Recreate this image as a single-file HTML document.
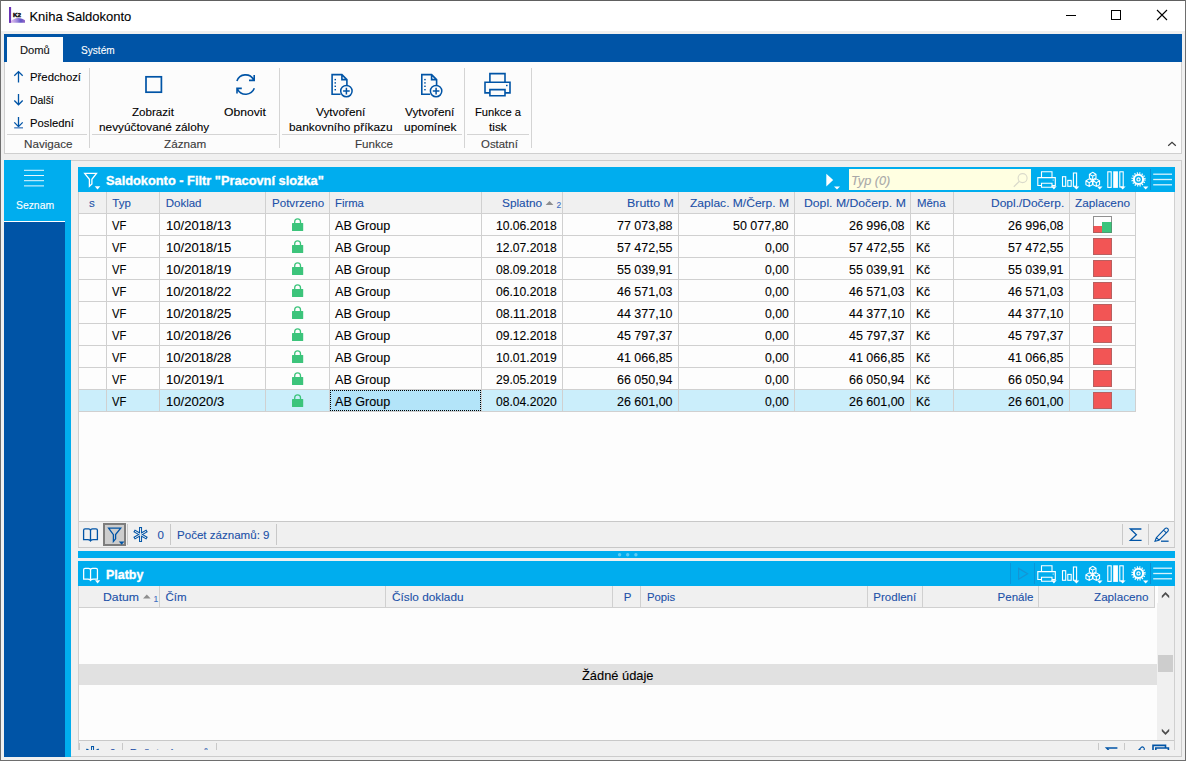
<!DOCTYPE html>
<html lang="cs"><head><meta charset="utf-8"><title>Kniha Saldokonto</title>
<style>
html,body{margin:0;padding:0}
body{width:1186px;height:761px;overflow:hidden;position:relative;background:#f0f0f0;font-family:"Liberation Sans",sans-serif;}
#win div,#win svg,#win span{position:absolute}
#win{position:absolute;left:0;top:0;width:1186px;height:761px;overflow:hidden}
.t{white-space:pre;line-height:normal;transform-origin:0 0;display:block;-webkit-text-stroke:0.1px currentColor}
svg{overflow:visible}
</style></head><body><div id="win">
<div style="left:0px;top:0px;width:1186px;height:761px;background:#f0f0f0;"></div><div style="left:1px;top:1px;width:1184px;height:30px;background:#ffffff;"></div><div style="left:4px;top:34px;width:1178px;height:28px;background:#0054a6;"></div><div style="left:7px;top:37px;width:56px;height:25px;background:#fcfcfc;"></div><div style="left:4px;top:62px;width:1178px;height:92px;background:#fcfcfc;box-sizing:border-box;border:1px solid #cfcfcf;border-top:none;"></div><span class="t" style="left:29.40px;top:8.5px;font-size:13px;color:#000;">Kniha Saldokonto</span><span class="t" style="left:19.60px;top:44px;font-size:10.5px;color:#111;transform:scaleX(1.0650);">Domů</span><span class="t" style="left:81.00px;top:44px;font-size:10.5px;color:#fff;transform:scaleX(0.9614);">Systém</span><span class="t" style="left:30.40px;top:71px;font-size:11.5px;color:#000;transform:scaleX(0.9851);">Předchozí</span><span class="t" style="left:30.40px;top:94px;font-size:11.5px;color:#000;transform:scaleX(0.9072);">Další</span><span class="t" style="left:30.40px;top:117px;font-size:11.5px;color:#000;transform:scaleX(0.9790);">Poslední</span><span class="t" style="left:23.80px;top:138px;font-size:11.5px;color:#3a3a3a;transform:scaleX(1.0137);">Navigace</span><span class="t" style="left:132.20px;top:106px;font-size:11.5px;color:#000;transform:scaleX(1.0083);">Zobrazit</span><span class="t" style="left:98.50px;top:121px;font-size:11.5px;color:#000;transform:scaleX(1.0265);">nevyúčtované zálohy</span><span class="t" style="left:224.00px;top:106px;font-size:11.5px;color:#000;transform:scaleX(1.0584);">Obnovit</span><span class="t" style="left:164.00px;top:138px;font-size:11.5px;color:#3a3a3a;transform:scaleX(1.0156);">Záznam</span><span class="t" style="left:315.50px;top:106px;font-size:11.5px;color:#000;transform:scaleX(1.0234);">Vytvoření</span><span class="t" style="left:288.70px;top:121px;font-size:11.5px;color:#000;transform:scaleX(1.0312);">bankovního příkazu</span><span class="t" style="left:405.30px;top:106px;font-size:11.5px;color:#000;transform:scaleX(1.0234);">Vytvoření</span><span class="t" style="left:404.40px;top:121px;font-size:11.5px;color:#000;transform:scaleX(1.0364);">upomínek</span><span class="t" style="left:354.70px;top:138px;font-size:11.5px;color:#3a3a3a;transform:scaleX(1.0076);">Funkce</span><span class="t" style="left:474.50px;top:106px;font-size:11.5px;color:#000;transform:scaleX(0.9706);">Funkce a</span><span class="t" style="left:489.00px;top:121px;font-size:11.5px;color:#000;transform:scaleX(1.0229);">tisk</span><span class="t" style="left:480.70px;top:138px;font-size:11.5px;color:#3a3a3a;transform:scaleX(0.9927);">Ostatní</span><div style="left:89px;top:68px;width:1px;height:80px;background:#d4d4d4;"></div><div style="left:279px;top:68px;width:1px;height:80px;background:#d4d4d4;"></div><div style="left:464px;top:68px;width:1px;height:80px;background:#d4d4d4;"></div><div style="left:531px;top:68px;width:1px;height:80px;background:#d4d4d4;"></div><div style="left:7px;top:134px;width:80px;height:1px;background:#d4d4d4;"></div><div style="left:92px;top:134px;width:185px;height:1px;background:#d4d4d4;"></div><div style="left:282px;top:134px;width:180px;height:1px;background:#d4d4d4;"></div><div style="left:467px;top:134px;width:62px;height:1px;background:#d4d4d4;"></div><div style="left:4px;top:160px;width:67px;height:597px;background:#00adee;"></div><div style="left:4px;top:221px;width:61px;height:1px;background:#ffffff;"></div><div style="left:4px;top:222px;width:61px;height:535px;background:#0054a6;"></div><span class="t" style="left:15.80px;top:199px;font-size:10.5px;color:#fff;transform:scaleX(0.9878);">Seznam</span><div style="left:71px;top:160px;width:1111px;height:1px;background:#cccccc;"></div><div style="left:1181px;top:160px;width:1px;height:597px;background:#cccccc;"></div><div style="left:71px;top:756px;width:1111px;height:1px;background:#cccccc;"></div><div style="left:78px;top:167px;width:1097px;height:25px;background:#00adee;"></div><div style="left:78px;top:192px;width:1097px;height:356px;background:#fdfdfd;"></div><div style="left:79px;top:192px;width:1057px;height:21px;background:#f0f0f0;"></div><div style="left:79px;top:390px;width:1056px;height:21px;background:#cbeefb;"></div><div style="left:330px;top:390px;width:151px;height:21px;background:#b3e4f9;box-sizing:border-box;border:1px dotted #000;"></div><div style="left:79px;top:213px;width:1057px;height:1px;background:#d0d0d0;"></div><div style="left:79px;top:235px;width:1057px;height:1px;background:#d0d0d0;"></div><div style="left:79px;top:257px;width:1057px;height:1px;background:#d0d0d0;"></div><div style="left:79px;top:279px;width:1057px;height:1px;background:#d0d0d0;"></div><div style="left:79px;top:301px;width:1057px;height:1px;background:#d0d0d0;"></div><div style="left:79px;top:323px;width:1057px;height:1px;background:#d0d0d0;"></div><div style="left:79px;top:345px;width:1057px;height:1px;background:#d0d0d0;"></div><div style="left:79px;top:367px;width:1057px;height:1px;background:#d0d0d0;"></div><div style="left:79px;top:389px;width:1057px;height:1px;background:#d0d0d0;"></div><div style="left:79px;top:411px;width:1057px;height:1px;background:#d0d0d0;"></div><div style="left:106px;top:192px;width:1px;height:220px;background:#d0d0d0;"></div><div style="left:159px;top:192px;width:1px;height:220px;background:#d0d0d0;"></div><div style="left:265px;top:192px;width:1px;height:220px;background:#d0d0d0;"></div><div style="left:329px;top:192px;width:1px;height:220px;background:#d0d0d0;"></div><div style="left:481px;top:192px;width:1px;height:220px;background:#d0d0d0;"></div><div style="left:562px;top:192px;width:1px;height:220px;background:#d0d0d0;"></div><div style="left:678px;top:192px;width:1px;height:220px;background:#d0d0d0;"></div><div style="left:794px;top:192px;width:1px;height:220px;background:#d0d0d0;"></div><div style="left:910px;top:192px;width:1px;height:220px;background:#d0d0d0;"></div><div style="left:953px;top:192px;width:1px;height:220px;background:#d0d0d0;"></div><div style="left:1069px;top:192px;width:1px;height:220px;background:#d0d0d0;"></div><div style="left:1135px;top:192px;width:1px;height:220px;background:#d0d0d0;"></div><div style="left:78px;top:192px;width:1px;height:356px;background:#d0d0d0;"></div><div style="left:1174px;top:192px;width:1px;height:356px;background:#d0d0d0;"></div><div style="left:79px;top:521px;width:1095px;height:1px;background:#c8c8c8;"></div><div style="left:79px;top:522px;width:1095px;height:25px;background:#f0f0f0;"></div><div style="left:78px;top:547px;width:1097px;height:1px;background:#c8c8c8;"></div><div style="left:127px;top:524px;width:1px;height:21px;background:#c8c8c8;"></div><div style="left:170px;top:524px;width:1px;height:21px;background:#c8c8c8;"></div><div style="left:276px;top:524px;width:1px;height:21px;background:#c8c8c8;"></div><div style="left:1122px;top:524px;width:1px;height:21px;background:#c8c8c8;"></div><div style="left:1148px;top:524px;width:1px;height:21px;background:#c8c8c8;"></div><div style="left:103px;top:523px;width:23px;height:23px;background:#cdcdcd;box-sizing:border-box;border:2px solid #7d7d7d;"></div><span class="t" style="left:157.40px;top:528.5px;font-size:11.5px;color:#2050a8;">0</span><span class="t" style="left:177.30px;top:528.5px;font-size:11.5px;color:#2050a8;transform:scaleX(1.0049);">Počet záznamů: 9</span><span class="t" style="left:105.70px;top:172.5px;font-size:13px;color:#fff;transform:scaleX(0.9849);font-weight:700;-webkit-text-stroke:0.35px #fff;">Saldokonto - Filtr &quot;Pracovní složka&quot;</span><div style="left:849px;top:169px;width:182px;height:21px;background:#ffffe1;"></div><span class="t" style="left:850.92px;top:172.6px;font-size:13px;color:#a8a8a8;transform:scaleX(0.9774);font-style:italic;">Typ (0)</span><span class="t" style="left:89.00px;top:197px;font-size:11.5px;color:#2050a8;">s</span><span class="t" style="left:112.30px;top:197px;font-size:11.5px;color:#2050a8;">Typ</span><span class="t" style="left:165.70px;top:197px;font-size:11.5px;color:#2050a8;">Doklad</span><span class="t" style="left:272.00px;top:197px;font-size:11.5px;color:#2050a8;transform:scaleX(1.0062);">Potvrzeno</span><span class="t" style="left:335.40px;top:197px;font-size:11.5px;color:#2050a8;transform:scaleX(0.9837);">Firma</span><span class="t" style="left:502.30px;top:197px;font-size:11.5px;color:#2050a8;transform:scaleX(1.0283);">Splatno</span><span class="t" style="left:556.40px;top:200px;font-size:8.5px;color:#3d6cc0;">2</span><span class="t" style="left:626.60px;top:197px;font-size:11.5px;color:#2050a8;transform:scaleX(1.0775);">Brutto M</span><span class="t" style="left:690.30px;top:197px;font-size:11.5px;color:#2050a8;transform:scaleX(1.0468);">Zaplac. M/Čerp. M</span><span class="t" style="left:803.70px;top:197px;font-size:11.5px;color:#2050a8;transform:scaleX(1.0622);">Dopl. M/Dočerp. M</span><span class="t" style="left:916.50px;top:197px;font-size:11.5px;color:#2050a8;transform:scaleX(0.9908);">Měna</span><span class="t" style="left:990.80px;top:197px;font-size:11.5px;color:#2050a8;transform:scaleX(1.0412);">Dopl./Dočerp.</span><span class="t" style="left:1075.20px;top:197px;font-size:11.5px;color:#2050a8;transform:scaleX(1.0242);">Zaplaceno</span><span class="t" style="left:112.30px;top:218px;font-size:13px;color:#000;transform:scaleX(0.8638);">VF</span><span class="t" style="left:166.00px;top:218px;font-size:13px;color:#000;transform:scaleX(1.0041);">10/2018/13</span><span class="t" style="left:335.20px;top:218px;font-size:13px;color:#000;transform:scaleX(0.9674);">AB Group</span><span class="t" style="left:495.70px;top:218px;font-size:13px;color:#000;transform:scaleX(0.9332);">10.06.2018</span><span class="t" style="left:617.20px;top:218px;font-size:13px;color:#000;transform:scaleX(0.9600);">77 073,88</span><span class="t" style="left:733.10px;top:218px;font-size:13px;color:#000;transform:scaleX(0.9600);">50 077,80</span><span class="t" style="left:849.30px;top:218px;font-size:13px;color:#000;transform:scaleX(0.9600);">26 996,08</span><span class="t" style="left:915.57px;top:218px;font-size:13px;color:#000;transform:scaleX(0.9338);">Kč</span><span class="t" style="left:1008.20px;top:218px;font-size:13px;color:#000;transform:scaleX(0.9600);">26 996,08</span><div style="left:1093px;top:216px;width:19px;height:17px;background:#fdfdfd;box-sizing:border-box;border:1px solid #909090;"></div><div style="left:1093px;top:226px;width:9px;height:7px;background:#f25555;box-sizing:border-box;border:1px solid #b25c5c;border-top:none;border-right:none;"></div><div style="left:1102px;top:222px;width:10px;height:11px;background:#3cc47c;box-sizing:border-box;border:1px solid #4f9a70;border-top:none;border-left:none;"></div><span class="t" style="left:112.30px;top:240px;font-size:13px;color:#000;transform:scaleX(0.8638);">VF</span><span class="t" style="left:166.00px;top:240px;font-size:13px;color:#000;transform:scaleX(1.0041);">10/2018/15</span><span class="t" style="left:335.20px;top:240px;font-size:13px;color:#000;transform:scaleX(0.9674);">AB Group</span><span class="t" style="left:495.70px;top:240px;font-size:13px;color:#000;transform:scaleX(0.9332);">12.07.2018</span><span class="t" style="left:617.20px;top:240px;font-size:13px;color:#000;transform:scaleX(0.9600);">57 472,55</span><span class="t" style="left:764.80px;top:240px;font-size:13px;color:#000;transform:scaleX(0.9413);">0,00</span><span class="t" style="left:849.30px;top:240px;font-size:13px;color:#000;transform:scaleX(0.9600);">57 472,55</span><span class="t" style="left:915.57px;top:240px;font-size:13px;color:#000;transform:scaleX(0.9338);">Kč</span><span class="t" style="left:1008.20px;top:240px;font-size:13px;color:#000;transform:scaleX(0.9600);">57 472,55</span><div style="left:1093px;top:238px;width:19px;height:17px;background:#f25555;box-sizing:border-box;border:1px solid #b86060;"></div><span class="t" style="left:112.30px;top:262px;font-size:13px;color:#000;transform:scaleX(0.8638);">VF</span><span class="t" style="left:166.00px;top:262px;font-size:13px;color:#000;transform:scaleX(1.0041);">10/2018/19</span><span class="t" style="left:335.20px;top:262px;font-size:13px;color:#000;transform:scaleX(0.9674);">AB Group</span><span class="t" style="left:495.70px;top:262px;font-size:13px;color:#000;transform:scaleX(0.9332);">08.09.2018</span><span class="t" style="left:617.20px;top:262px;font-size:13px;color:#000;transform:scaleX(0.9600);">55 039,91</span><span class="t" style="left:764.80px;top:262px;font-size:13px;color:#000;transform:scaleX(0.9413);">0,00</span><span class="t" style="left:849.30px;top:262px;font-size:13px;color:#000;transform:scaleX(0.9600);">55 039,91</span><span class="t" style="left:915.57px;top:262px;font-size:13px;color:#000;transform:scaleX(0.9338);">Kč</span><span class="t" style="left:1008.20px;top:262px;font-size:13px;color:#000;transform:scaleX(0.9600);">55 039,91</span><div style="left:1093px;top:260px;width:19px;height:17px;background:#f25555;box-sizing:border-box;border:1px solid #b86060;"></div><span class="t" style="left:112.30px;top:284px;font-size:13px;color:#000;transform:scaleX(0.8638);">VF</span><span class="t" style="left:166.00px;top:284px;font-size:13px;color:#000;transform:scaleX(1.0041);">10/2018/22</span><span class="t" style="left:335.20px;top:284px;font-size:13px;color:#000;transform:scaleX(0.9674);">AB Group</span><span class="t" style="left:495.70px;top:284px;font-size:13px;color:#000;transform:scaleX(0.9332);">06.10.2018</span><span class="t" style="left:617.20px;top:284px;font-size:13px;color:#000;transform:scaleX(0.9600);">46 571,03</span><span class="t" style="left:764.80px;top:284px;font-size:13px;color:#000;transform:scaleX(0.9413);">0,00</span><span class="t" style="left:849.30px;top:284px;font-size:13px;color:#000;transform:scaleX(0.9600);">46 571,03</span><span class="t" style="left:915.57px;top:284px;font-size:13px;color:#000;transform:scaleX(0.9338);">Kč</span><span class="t" style="left:1008.20px;top:284px;font-size:13px;color:#000;transform:scaleX(0.9600);">46 571,03</span><div style="left:1093px;top:282px;width:19px;height:17px;background:#f25555;box-sizing:border-box;border:1px solid #b86060;"></div><span class="t" style="left:112.30px;top:306px;font-size:13px;color:#000;transform:scaleX(0.8638);">VF</span><span class="t" style="left:166.00px;top:306px;font-size:13px;color:#000;transform:scaleX(1.0041);">10/2018/25</span><span class="t" style="left:335.20px;top:306px;font-size:13px;color:#000;transform:scaleX(0.9674);">AB Group</span><span class="t" style="left:495.70px;top:306px;font-size:13px;color:#000;transform:scaleX(0.9473);">08.11.2018</span><span class="t" style="left:617.20px;top:306px;font-size:13px;color:#000;transform:scaleX(0.9600);">44 377,10</span><span class="t" style="left:764.80px;top:306px;font-size:13px;color:#000;transform:scaleX(0.9413);">0,00</span><span class="t" style="left:849.30px;top:306px;font-size:13px;color:#000;transform:scaleX(0.9600);">44 377,10</span><span class="t" style="left:915.57px;top:306px;font-size:13px;color:#000;transform:scaleX(0.9338);">Kč</span><span class="t" style="left:1008.20px;top:306px;font-size:13px;color:#000;transform:scaleX(0.9600);">44 377,10</span><div style="left:1093px;top:304px;width:19px;height:17px;background:#f25555;box-sizing:border-box;border:1px solid #b86060;"></div><span class="t" style="left:112.30px;top:328px;font-size:13px;color:#000;transform:scaleX(0.8638);">VF</span><span class="t" style="left:166.00px;top:328px;font-size:13px;color:#000;transform:scaleX(1.0041);">10/2018/26</span><span class="t" style="left:335.20px;top:328px;font-size:13px;color:#000;transform:scaleX(0.9674);">AB Group</span><span class="t" style="left:495.70px;top:328px;font-size:13px;color:#000;transform:scaleX(0.9332);">09.12.2018</span><span class="t" style="left:617.20px;top:328px;font-size:13px;color:#000;transform:scaleX(0.9600);">45 797,37</span><span class="t" style="left:764.80px;top:328px;font-size:13px;color:#000;transform:scaleX(0.9413);">0,00</span><span class="t" style="left:849.30px;top:328px;font-size:13px;color:#000;transform:scaleX(0.9600);">45 797,37</span><span class="t" style="left:915.57px;top:328px;font-size:13px;color:#000;transform:scaleX(0.9338);">Kč</span><span class="t" style="left:1008.20px;top:328px;font-size:13px;color:#000;transform:scaleX(0.9600);">45 797,37</span><div style="left:1093px;top:326px;width:19px;height:17px;background:#f25555;box-sizing:border-box;border:1px solid #b86060;"></div><span class="t" style="left:112.30px;top:350px;font-size:13px;color:#000;transform:scaleX(0.8638);">VF</span><span class="t" style="left:166.00px;top:350px;font-size:13px;color:#000;transform:scaleX(1.0041);">10/2018/28</span><span class="t" style="left:335.20px;top:350px;font-size:13px;color:#000;transform:scaleX(0.9674);">AB Group</span><span class="t" style="left:495.70px;top:350px;font-size:13px;color:#000;transform:scaleX(0.9332);">10.01.2019</span><span class="t" style="left:617.20px;top:350px;font-size:13px;color:#000;transform:scaleX(0.9600);">41 066,85</span><span class="t" style="left:764.80px;top:350px;font-size:13px;color:#000;transform:scaleX(0.9413);">0,00</span><span class="t" style="left:849.30px;top:350px;font-size:13px;color:#000;transform:scaleX(0.9600);">41 066,85</span><span class="t" style="left:915.57px;top:350px;font-size:13px;color:#000;transform:scaleX(0.9338);">Kč</span><span class="t" style="left:1008.20px;top:350px;font-size:13px;color:#000;transform:scaleX(0.9600);">41 066,85</span><div style="left:1093px;top:348px;width:19px;height:17px;background:#f25555;box-sizing:border-box;border:1px solid #b86060;"></div><span class="t" style="left:112.30px;top:372px;font-size:13px;color:#000;transform:scaleX(0.8638);">VF</span><span class="t" style="left:166.00px;top:372px;font-size:13px;color:#000;transform:scaleX(1.0086);">10/2019/1</span><span class="t" style="left:335.20px;top:372px;font-size:13px;color:#000;transform:scaleX(0.9674);">AB Group</span><span class="t" style="left:495.70px;top:372px;font-size:13px;color:#000;transform:scaleX(0.9332);">29.05.2019</span><span class="t" style="left:617.20px;top:372px;font-size:13px;color:#000;transform:scaleX(0.9600);">66 050,94</span><span class="t" style="left:764.80px;top:372px;font-size:13px;color:#000;transform:scaleX(0.9413);">0,00</span><span class="t" style="left:849.30px;top:372px;font-size:13px;color:#000;transform:scaleX(0.9600);">66 050,94</span><span class="t" style="left:915.57px;top:372px;font-size:13px;color:#000;transform:scaleX(0.9338);">Kč</span><span class="t" style="left:1008.20px;top:372px;font-size:13px;color:#000;transform:scaleX(0.9600);">66 050,94</span><div style="left:1093px;top:370px;width:19px;height:17px;background:#f25555;box-sizing:border-box;border:1px solid #b86060;"></div><span class="t" style="left:112.30px;top:394px;font-size:13px;color:#000;transform:scaleX(0.8638);">VF</span><span class="t" style="left:166.00px;top:394px;font-size:13px;color:#000;transform:scaleX(1.0086);">10/2020/3</span><span class="t" style="left:335.20px;top:394px;font-size:13px;color:#000;transform:scaleX(0.9674);">AB Group</span><span class="t" style="left:495.70px;top:394px;font-size:13px;color:#000;transform:scaleX(0.9332);">08.04.2020</span><span class="t" style="left:617.20px;top:394px;font-size:13px;color:#000;transform:scaleX(0.9600);">26 601,00</span><span class="t" style="left:764.80px;top:394px;font-size:13px;color:#000;transform:scaleX(0.9413);">0,00</span><span class="t" style="left:849.30px;top:394px;font-size:13px;color:#000;transform:scaleX(0.9600);">26 601,00</span><span class="t" style="left:915.57px;top:394px;font-size:13px;color:#000;transform:scaleX(0.9338);">Kč</span><span class="t" style="left:1008.20px;top:394px;font-size:13px;color:#000;transform:scaleX(0.9600);">26 601,00</span><div style="left:1093px;top:392px;width:19px;height:17px;background:#f25555;box-sizing:border-box;border:1px solid #b86060;"></div><div style="left:78px;top:551px;width:1097px;height:7px;background:#00adee;"></div><div style="left:78px;top:561px;width:1097px;height:25px;background:#00adee;"></div><div style="left:78px;top:586px;width:1097px;height:164px;background:#fdfdfd;"></div><div style="left:79px;top:586px;width:1076px;height:21px;background:#f0f0f0;"></div><div style="left:79px;top:607px;width:1076px;height:1px;background:#d0d0d0;"></div><div style="left:159px;top:586px;width:1px;height:21px;background:#d0d0d0;"></div><div style="left:385px;top:586px;width:1px;height:21px;background:#d0d0d0;"></div><div style="left:612px;top:586px;width:1px;height:21px;background:#d0d0d0;"></div><div style="left:640px;top:586px;width:1px;height:21px;background:#d0d0d0;"></div><div style="left:867px;top:586px;width:1px;height:21px;background:#d0d0d0;"></div><div style="left:922px;top:586px;width:1px;height:21px;background:#d0d0d0;"></div><div style="left:1038px;top:586px;width:1px;height:21px;background:#d0d0d0;"></div><div style="left:1154px;top:586px;width:1px;height:21px;background:#d0d0d0;"></div><div style="left:1157px;top:586px;width:17px;height:154px;background:#f0f0f0;"></div><div style="left:1158px;top:655px;width:15px;height:17px;background:#cdcdcd;"></div><div style="left:1157px;top:586px;width:1px;height:17px;background:#fdfdfd;"></div><div style="left:79px;top:664px;width:1078px;height:21px;background:#e1e1e1;"></div><div style="left:78px;top:586px;width:1px;height:164px;background:#d0d0d0;"></div><div style="left:1174px;top:586px;width:1px;height:164px;background:#d0d0d0;"></div><div style="left:79px;top:740px;width:1095px;height:1px;background:#c8c8c8;"></div><div style="left:79px;top:741px;width:1095px;height:9px;background:#f0f0f0;"></div><div style="left:79px;top:743px;width:1px;height:7px;background:#c8c8c8;"></div><div style="left:122px;top:743px;width:1px;height:7px;background:#c8c8c8;"></div><div style="left:216px;top:743px;width:1px;height:7px;background:#c8c8c8;"></div><div style="left:1098px;top:743px;width:1px;height:7px;background:#c8c8c8;"></div><div style="left:1124px;top:743px;width:1px;height:7px;background:#c8c8c8;"></div><span class="t" style="left:109.40px;top:746.5px;font-size:11.5px;color:#2050a8;">0</span><span class="t" style="left:129.80px;top:746.5px;font-size:11.5px;color:#2050a8;">Počet záznamů:</span><span class="t" style="left:105.80px;top:566.5px;font-size:13px;color:#fff;transform:scaleX(0.9577);font-weight:700;-webkit-text-stroke:0.35px #fff;">Platby</span><span class="t" style="left:103.40px;top:590.5px;font-size:11.5px;color:#2050a8;transform:scaleX(1.0633);">Datum</span><span class="t" style="left:153.60px;top:593.5px;font-size:8.5px;color:#3d6cc0;">1</span><span class="t" style="left:165.50px;top:590.5px;font-size:11.5px;color:#2050a8;">Čím</span><span class="t" style="left:391.70px;top:590.5px;font-size:11.5px;color:#2050a8;transform:scaleX(1.0262);">Číslo dokladu</span><span class="t" style="left:623.80px;top:590.5px;font-size:11.5px;color:#2050a8;">P</span><span class="t" style="left:646.50px;top:590.5px;font-size:11.5px;color:#2050a8;transform:scaleX(0.9822);">Popis</span><span class="t" style="left:873.36px;top:590.5px;font-size:11.5px;color:#2050a8;">Prodlení</span><span class="t" style="left:997.59px;top:590.5px;font-size:11.5px;color:#2050a8;">Penále</span><span class="t" style="left:1094.10px;top:590.5px;font-size:11.5px;color:#2050a8;transform:scaleX(1.0149);">Zaplaceno</span><span class="t" style="left:582.10px;top:668px;font-size:13px;color:#000;transform:scaleX(0.9882);">Žádné údaje</span><svg width="1186" height="761" viewBox="0 0 1186 761" style="left:0;top:0"><defs><linearGradient id="k2g" x1="0" y1="0" x2="1" y2="0"><stop offset="0" stop-color="#e2b8ec"/><stop offset="0.45" stop-color="#8f78d8"/><stop offset="0.7" stop-color="#4f43c0"/><stop offset="1" stop-color="#8a55c0"/></linearGradient></defs><path d="M11 22.8 L11 21 C13 19.6 15.5 18.1 18 18.1 C21 18.1 23.5 19.3 25 20.2 L25 22.8 Z" fill="url(#k2g)" opacity="0.9"/><rect x="9" y="7" width="2.1" height="15.9" fill="#6a35b5"/><text x="12.9" y="16.9" font-family="Liberation Sans,sans-serif" font-size="5.6" font-weight="700" fill="#111" stroke="#111" stroke-width="0.45" textLength="8" lengthAdjust="spacingAndGlyphs">K2</text><path d="M1066 15.5 H1076" fill="none" stroke="#000" stroke-width="1" /><rect x="1111.5" y="10.5" width="9" height="9" fill="none" stroke="#000" stroke-width="1"/><path d="M1157 10 L1167 20 M1167 10 L1157 20" fill="none" stroke="#000" stroke-width="1.1" /><path d="M1168.2 145.7 L1172 142.3 L1175.8 145.7" fill="none" stroke="#3a3a3a" stroke-width="1.2" /><path d="M18.5 82.5 V71.6 M14.3 75.8 L18.5 71.6 L22.7 75.8" fill="none" stroke="#0054a6" stroke-width="1.3" /><path d="M18.5 94 V104.8 M14.3 100.5 L18.5 104.8 L22.7 100.5" fill="none" stroke="#0054a6" stroke-width="1.3" /><path d="M18.5 117 V126.6 M14.3 122.4 L18.5 126.6 L22.7 122.4" fill="none" stroke="#0054a6" stroke-width="1.3" /><path d="M14.2 127.8 H23" fill="none" stroke="#5b8cc7" stroke-width="1.5" /><rect x="146" y="76.8" width="15.4" height="15.4" fill="none" stroke="#0054a6" stroke-width="1.7"/><path d="M236.9 81 A9.2 9.2 0 0 1 253.6 79.6 M254.2 75.1 V80.4 H249" fill="none" stroke="#0054a6" stroke-width="1.6" /><path d="M254.3 88.3 A9.2 9.2 0 0 1 237.6 89.4 M237 93.6 V88.4 H241.8" fill="none" stroke="#0054a6" stroke-width="1.6" /><path d="M346.90000000000003 86 V79.6 L341.90000000000003 74.6 H332.1 V94.2 H340.6 M341.90000000000003 74.6 V79.6 H346.90000000000003" fill="none" stroke="#0054a6" stroke-width="1.6" /><rect x="334.5" y="78.89999999999999" width="1.5" height="1.4" fill="#0054a6"/><rect x="334.5" y="82.2" width="1.5" height="1.4" fill="#0054a6"/><rect x="334.5" y="85.6" width="1.5" height="1.4" fill="#0054a6"/><rect x="334.5" y="89.0" width="1.5" height="1.4" fill="#0054a6"/><circle cx="346.40000000000003" cy="91.1" r="5.7" fill="#fcfcfc" stroke="#0054a6" stroke-width="1.5"/><path d="M343.1 91.1 H349.7 M346.40000000000003 87.8 V94.4" fill="none" stroke="#0054a6" stroke-width="1.5" /><path d="M436.6 86 V79.6 L431.6 74.6 H421.8 V94.2 H430.3 M431.6 74.6 V79.6 H436.6" fill="none" stroke="#0054a6" stroke-width="1.6" /><rect x="424.2" y="78.89999999999999" width="1.5" height="1.4" fill="#0054a6"/><rect x="424.2" y="82.2" width="1.5" height="1.4" fill="#0054a6"/><rect x="424.2" y="85.6" width="1.5" height="1.4" fill="#0054a6"/><rect x="424.2" y="89.0" width="1.5" height="1.4" fill="#0054a6"/><circle cx="436.1" cy="91.1" r="5.7" fill="#fcfcfc" stroke="#0054a6" stroke-width="1.5"/><path d="M432.8 91.1 H439.4 M436.1 87.8 V94.4" fill="none" stroke="#0054a6" stroke-width="1.5" /><path d="M489.9 81.8 V73.6 H505 V81.8 M489.9 92.9 H485 V82.2 H510 V92.9 H505 M489.9 89.6 H505 V95.8 H489.9 Z" fill="none" stroke="#0054a6" stroke-width="1.6" /><rect x="506" y="84.8" width="1.6" height="1.4" fill="#0054a6"/><path d="M24 170.3 H44" fill="none" stroke="#e8f7fd" stroke-width="1.0" /><path d="M24 175.5 H44" fill="none" stroke="#e8f7fd" stroke-width="1.0" /><path d="M24 180.7 H44" fill="none" stroke="#e8f7fd" stroke-width="1.0" /><path d="M24 185.9 H44" fill="none" stroke="#e8f7fd" stroke-width="1.0" /><path d="M1041.5 177.5 V171.8 H1052 V177.5 M1041.5 185.5 H1037.8 V177.6 H1055.3 V185.5 H1052 M1041.5 183.2 H1052 V187.2 H1041.5 Z" fill="none" stroke="#fff" stroke-width="1.1" /><rect x="1052.6" y="179.6" width="1.2" height="1" fill="#fff" opacity="0.8"/><path d="M1051.2 186.3 H1056.6 L1053.9 189.6 Z" fill="#fff"  /><rect x="1062.5" y="176.7" width="3.2" height="9.6" fill="none" stroke="#fff" stroke-width="1.1"/><rect x="1067.8" y="180.4" width="3.4" height="5.9" fill="none" stroke="#fff" stroke-width="1.1"/><rect x="1073.4" y="173" width="3.2" height="13.3" fill="none" stroke="#fff" stroke-width="1.1"/><path d="M1073.5 186.6 H1079.3 L1076.4 189.6 Z" fill="#fff"  /><path d="M1092.7 172.29999999999998 L1095.99 174.2 V178.0 L1092.7 179.9 L1089.41 178.0 V174.2 Z M1089.41 174.2 L1092.7 176.1 L1095.99 174.2 M1092.7 176.1 V179.9" fill="none" stroke="#fff" stroke-width="1.05" /><path d="M1089.2 178.89999999999998 L1092.49 180.79999999999998 V184.6 L1089.2 186.5 L1085.91 184.6 V180.79999999999998 Z M1085.91 180.79999999999998 L1089.2 182.7 L1092.49 180.79999999999998 M1089.2 182.7 V186.5" fill="none" stroke="#fff" stroke-width="1.05" /><path d="M1096.3 178.89999999999998 L1099.59 180.79999999999998 V184.6 L1096.3 186.5 L1093.01 184.6 V180.79999999999998 Z M1093.01 180.79999999999998 L1096.3 182.7 L1099.59 180.79999999999998 M1096.3 182.7 V186.5" fill="none" stroke="#fff" stroke-width="1.05" /><path d="M1097 186.6 H1102.5 L1099.7 189.6 Z" fill="#fff"  /><rect x="1107.8" y="171.8" width="3.4" height="15.6" fill="none" stroke="#fff" stroke-width="1.1"/><rect x="1113.2" y="171.3" width="4.7" height="16.6" fill="#fff"/><rect x="1119.8" y="171.8" width="3.4" height="15.2" fill="none" stroke="#fff" stroke-width="1.1"/><path d="M1119.8 186.4 H1125.6 L1122.7 189.6 Z" fill="#fff"  /><circle cx="1138.5" cy="179.4" r="6.4" fill="none" stroke="#fff" stroke-width="1.5" stroke-dasharray="1.2 1.313"/><circle cx="1138.5" cy="179.4" r="4.6" fill="none" stroke="#fff" stroke-width="2.1"/><circle cx="1138.5" cy="179.4" r="1.6" fill="none" stroke="#fff" stroke-width="1.2"/><path d="M1143 186.4 H1148.4 L1145.7 189.6 Z" fill="#fff"  /><rect x="1150" y="169" width="1" height="21" fill="#0b8fd3"/><path d="M1153.2 174.2 H1172" fill="none" stroke="#d9f3fd" stroke-width="1.3" /><path d="M1153.2 179.5 H1172" fill="none" stroke="#d9f3fd" stroke-width="1.3" /><path d="M1153.2 184.8 H1172" fill="none" stroke="#d9f3fd" stroke-width="1.3" /><path d="M1041.5 571.5 V565.8 H1052 V571.5 M1041.5 579.5 H1037.8 V571.6 H1055.3 V579.5 H1052 M1041.5 577.2 H1052 V581.2 H1041.5 Z" fill="none" stroke="#fff" stroke-width="1.1" /><rect x="1052.6" y="573.6" width="1.2" height="1" fill="#fff" opacity="0.8"/><path d="M1051.2 580.3 H1056.6 L1053.9 583.6 Z" fill="#fff"  /><rect x="1062.5" y="570.7" width="3.2" height="9.6" fill="none" stroke="#fff" stroke-width="1.1"/><rect x="1067.8" y="574.4" width="3.4" height="5.9" fill="none" stroke="#fff" stroke-width="1.1"/><rect x="1073.4" y="567" width="3.2" height="13.3" fill="none" stroke="#fff" stroke-width="1.1"/><path d="M1073.5 580.6 H1079.3 L1076.4 583.6 Z" fill="#fff"  /><path d="M1092.7 566.3000000000001 L1095.99 568.2 V572.0 L1092.7 573.9 L1089.41 572.0 V568.2 Z M1089.41 568.2 L1092.7 570.1 L1095.99 568.2 M1092.7 570.1 V573.9" fill="none" stroke="#fff" stroke-width="1.05" /><path d="M1089.2 572.9000000000001 L1092.49 574.8000000000001 V578.6 L1089.2 580.5 L1085.91 578.6 V574.8000000000001 Z M1085.91 574.8000000000001 L1089.2 576.7 L1092.49 574.8000000000001 M1089.2 576.7 V580.5" fill="none" stroke="#fff" stroke-width="1.05" /><path d="M1096.3 572.9000000000001 L1099.59 574.8000000000001 V578.6 L1096.3 580.5 L1093.01 578.6 V574.8000000000001 Z M1093.01 574.8000000000001 L1096.3 576.7 L1099.59 574.8000000000001 M1096.3 576.7 V580.5" fill="none" stroke="#fff" stroke-width="1.05" /><path d="M1097 580.6 H1102.5 L1099.7 583.6 Z" fill="#fff"  /><rect x="1107.8" y="565.8" width="3.4" height="15.6" fill="none" stroke="#fff" stroke-width="1.1"/><rect x="1113.2" y="565.3" width="4.7" height="16.6" fill="#fff"/><rect x="1119.8" y="565.8" width="3.4" height="15.2" fill="none" stroke="#fff" stroke-width="1.1"/><path d="M1119.8 580.4 H1125.6 L1122.7 583.6 Z" fill="#fff"  /><circle cx="1138.5" cy="573.4" r="6.4" fill="none" stroke="#fff" stroke-width="1.5" stroke-dasharray="1.2 1.313"/><circle cx="1138.5" cy="573.4" r="4.6" fill="none" stroke="#fff" stroke-width="2.1"/><circle cx="1138.5" cy="573.4" r="1.6" fill="none" stroke="#fff" stroke-width="1.2"/><path d="M1143 580.4 H1148.4 L1145.7 583.6 Z" fill="#fff"  /><rect x="1150" y="563" width="1" height="21" fill="#0b8fd3"/><path d="M1153.2 568.2 H1172" fill="none" stroke="#d9f3fd" stroke-width="1.3" /><path d="M1153.2 573.5 H1172" fill="none" stroke="#d9f3fd" stroke-width="1.3" /><path d="M1153.2 578.8 H1172" fill="none" stroke="#d9f3fd" stroke-width="1.3" /><path d="M84.7 173.4 H96.5 L91.9 179.3 V184 L89.4 186.2 V179.3 Z" fill="none" stroke="#fff" stroke-width="1.3" stroke-linejoin="miter"/><path d="M94.7 186.3 H100.3 L97.5 189.6 Z" fill="#fff"  /><path d="M826.3 173.8 V186.4 L833.2 180.1 Z" fill="#fff"  /><path d="M834 186.4 H840 L837 189.4 Z" fill="#fff"  /><circle cx="1022.6" cy="178.1" r="4.5" fill="none" stroke="#dadacb" stroke-width="1.1"/><path d="M1019.2 181.5 L1013.8 186.8" fill="none" stroke="#dadacb" stroke-width="1.2" /><path d="M545.6 204.9 L549.5 201 L553.4 204.9 Z" fill="#8e8e8e"  /><path d="M143 598.4 L146.8 594.6 L150.6 598.4 Z" fill="#8e8e8e"  /><rect x="292" y="223" width="11.2" height="7.9" rx="0.5" fill="#3cc47b"/><path d="M294.7 223.5 V221.7 A2.9 2.9 0 0 1 300.5 221.7 V223.5" fill="none" stroke="#3cc47b" stroke-width="1.3" /><rect x="292" y="245" width="11.2" height="7.9" rx="0.5" fill="#3cc47b"/><path d="M294.7 245.5 V243.7 A2.9 2.9 0 0 1 300.5 243.7 V245.5" fill="none" stroke="#3cc47b" stroke-width="1.3" /><rect x="292" y="267" width="11.2" height="7.9" rx="0.5" fill="#3cc47b"/><path d="M294.7 267.5 V265.7 A2.9 2.9 0 0 1 300.5 265.7 V267.5" fill="none" stroke="#3cc47b" stroke-width="1.3" /><rect x="292" y="289" width="11.2" height="7.9" rx="0.5" fill="#3cc47b"/><path d="M294.7 289.5 V287.7 A2.9 2.9 0 0 1 300.5 287.7 V289.5" fill="none" stroke="#3cc47b" stroke-width="1.3" /><rect x="292" y="311" width="11.2" height="7.9" rx="0.5" fill="#3cc47b"/><path d="M294.7 311.5 V309.7 A2.9 2.9 0 0 1 300.5 309.7 V311.5" fill="none" stroke="#3cc47b" stroke-width="1.3" /><rect x="292" y="333" width="11.2" height="7.9" rx="0.5" fill="#3cc47b"/><path d="M294.7 333.5 V331.7 A2.9 2.9 0 0 1 300.5 331.7 V333.5" fill="none" stroke="#3cc47b" stroke-width="1.3" /><rect x="292" y="355" width="11.2" height="7.9" rx="0.5" fill="#3cc47b"/><path d="M294.7 355.5 V353.7 A2.9 2.9 0 0 1 300.5 353.7 V355.5" fill="none" stroke="#3cc47b" stroke-width="1.3" /><rect x="292" y="377" width="11.2" height="7.9" rx="0.5" fill="#3cc47b"/><path d="M294.7 377.5 V375.7 A2.9 2.9 0 0 1 300.5 375.7 V377.5" fill="none" stroke="#3cc47b" stroke-width="1.3" /><rect x="292" y="399" width="11.2" height="7.9" rx="0.5" fill="#3cc47b"/><path d="M294.7 399.5 V397.7 A2.9 2.9 0 0 1 300.5 397.7 V399.5" fill="none" stroke="#3cc47b" stroke-width="1.3" /><path d="M83.60 530.20 Q83.60 528.90 85.00 528.90 H88.40 Q90.50 528.90 90.50 530.80 V540.80 M90.50 530.80 Q90.50 528.90 92.60 528.90 H96.00 Q97.40 528.90 97.40 530.20 V539.60 H93.40 Q91.30 539.60 90.50 540.80 Q89.70 539.60 87.60 539.60 H83.60 V530.20" fill="none" stroke="#0054a6" stroke-width="1.3" /><path d="M83.65 569.70 Q83.65 568.40 85.05 568.40 H88.45 Q90.55 568.40 90.55 570.30 V580.30 M90.55 570.30 Q90.55 568.40 92.65 568.40 H96.05 Q97.45 568.40 97.45 569.70 V579.10 H93.45 Q91.35 579.10 90.55 580.30 Q89.75 579.10 87.65 579.10 H83.65 V569.70" fill="none" stroke="#fff" stroke-width="1.25" /><path d="M95 580.3 H100.2 L97.6 583.6 Z" fill="#fff"  /><path d="M108.6 528.2 H120.7 L115.6 534.6 V538.8 L113.4 541.4 V534.6 Z" fill="none" stroke="#0054a6" stroke-width="1.3" /><path d="M118.8 541.4 H124.5 L121.65 544.8 Z" fill="#0054a6"  /><path d="M140.55 534.55 L140.55 542.05 M140.55 534.55 L134.05 538.30 M140.55 534.55 L134.05 530.80 M140.55 534.55 L140.55 527.05 M140.55 534.55 L147.05 530.80 M140.55 534.55 L147.05 538.30 " fill="none" stroke="#0054a6" stroke-width="3.0" /><path d="M140.55 534.55 L140.55 541.05 M140.55 534.55 L134.92 537.80 M140.55 534.55 L134.92 531.30 M140.55 534.55 L140.55 528.05 M140.55 534.55 L146.18 531.30 M140.55 534.55 L146.18 537.80 " fill="none" stroke="#f0f0f0" stroke-width="1.0" /><path d="M92.55 753.55 L92.55 761.05 M92.55 753.55 L86.05 757.30 M92.55 753.55 L86.05 749.80 M92.55 753.55 L92.55 746.05 M92.55 753.55 L99.05 749.80 M92.55 753.55 L99.05 757.30 " fill="none" stroke="#0054a6" stroke-width="3.0" /><path d="M92.55 753.55 L92.55 760.05 M92.55 753.55 L86.92 756.80 M92.55 753.55 L86.92 750.30 M92.55 753.55 L92.55 747.05 M92.55 753.55 L98.18 750.30 M92.55 753.55 L98.18 756.80 " fill="none" stroke="#f0f0f0" stroke-width="1.0" /><path d="M1141.4 529 H1130.4 L1136.4 534.7 L1130.4 540.4 H1141.6" fill="none" stroke="#0054a6" stroke-width="1.3" /><path d="M1156.4 537.6 L1165 528.6 A1.9 1.9 0 0 1 1167.8 531.3 L1159 540.2 L1155 541.2 Z M1163.6 530.2 L1166.3 532.9 M1156.4 537.6 L1159 540.2" fill="none" stroke="#0054a6" stroke-width="1.1" /><path d="M1161 541.2 H1168.6" fill="none" stroke="#0054a6" stroke-width="1.3" /><path d="M1117.4 748 H1106.4 L1112.4 753.7 L1106.4 759.4 H1117.6" fill="none" stroke="#0054a6" stroke-width="1.3" /><path d="M1132.4 756.6 L1141 747.6 A1.9 1.9 0 0 1 1143.8 750.3 L1135 759.2 L1131 760.2 Z M1139.6 749.2 L1142.3 751.9 M1132.4 756.6 L1135 759.2" fill="none" stroke="#0054a6" stroke-width="1.1" /><path d="M1137 760.2 H1144.6" fill="none" stroke="#0054a6" stroke-width="1.3" /><path d="M1153 757 V745.4 H1165.5 V747.6 M1155.8 757 V748 H1168.4 V757" fill="none" stroke="#0054a6" stroke-width="1.6" /><circle cx="619.6" cy="554.8" r="1.7" fill="#5ccbf5"/><circle cx="627.7" cy="554.8" r="1.7" fill="#5ccbf5"/><circle cx="635.9" cy="554.8" r="1.7" fill="#5ccbf5"/><path d="M1018.6 568.4 V579.2 L1027.6 573.8 Z" fill="none" stroke="#1494d4" stroke-width="1.2" /><rect x="1010" y="563" width="1" height="21" fill="#0a96d9"/><rect x="1034" y="563" width="1" height="21" fill="#0a96d9"/><path d="M1165.5 592 L1169.2 595.7 V598.2 L1165.5 594.5 L1161.8 598.2 V595.7 Z" fill="#4d4d4d"  /><path d="M1161.8 728.8 L1165.5 732.5 L1169.2 728.8 V731.3 L1165.5 735 L1161.8 731.3 Z" fill="#4d4d4d"  /></svg><div style="left:71px;top:750px;width:1114px;height:10px;background:#f0f0f0;"></div><div style="left:71px;top:756px;width:1111px;height:1px;background:#cccccc;"></div><div style="left:1181px;top:750px;width:1px;height:7px;background:#cccccc;"></div><div style="left:0px;top:0px;width:1186px;height:1px;background:#606060;"></div><div style="left:0px;top:0px;width:1px;height:761px;background:#6e6e6e;"></div><div style="left:1185px;top:0px;width:1px;height:761px;background:#6e6e6e;"></div><div style="left:0px;top:760px;width:1186px;height:1px;background:#6e6e6e;"></div>
</div></body></html>
